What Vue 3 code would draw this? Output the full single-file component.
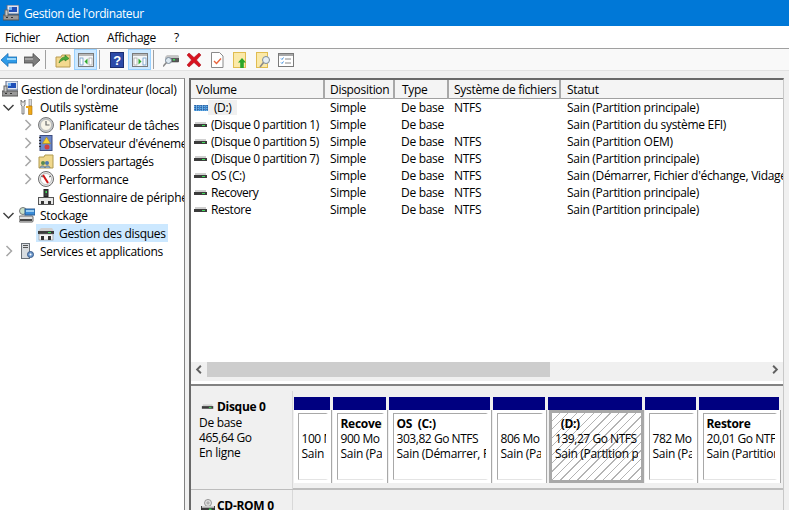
<template>
  <div class="window">
    <div class="titlebar">
      <svg class="title-icon" viewBox="0 0 16 16" v-html="icons.computer"></svg>
      <span>Gestion de l'ordinateur</span>
    </div>

    <div class="menubar">
      <span v-for="m in menus" :key="m.label" class="menu-item" :style="{ width: m.width + 'px' }">{{ m.label }}</span>
    </div>

    <div class="toolbar">
      <template v-for="(b, index) in toolbar" :key="index">
        <span v-if="b === 'sep'" class="tool-sep"></span>
        <span v-else class="tool-btn" :class="{ toggled: b.startsWith('toggle') }">
          <svg viewBox="0 0 16 16" v-html="icons[b]"></svg>
        </span>
      </template>
    </div>

    <div class="panes">
      <div class="tree">
        <div v-for="row in treeRows" :key="row.label" class="tree-row" :class="'level-' + row.level">
          <svg v-if="row.level" class="chevron" :class="row.open ? 'open' : ''" viewBox="0 0 16 16">
            <path v-if="row.open === true" d="M3 6l5 5 5-5" />
            <path v-else-if="row.open === false" d="M6 3l5 5-5 5" />
          </svg>
          <span class="node" :class="{ selected: row.selected }">
            <svg class="node-icon" viewBox="0 0 16 16" v-html="icons[row.icon]"></svg>
            <span class="node-label">{{ row.label }}</span>
          </span>
        </div>
      </div>

      <div class="splitter"></div>

      <div class="content">
        <div class="list">
          <div class="list-head">
            <span v-for="col in columns" :key="col" class="head-cell">{{ col }}</span>
          </div>
          <div class="list-body">
            <div v-for="vol in volumes" :key="vol.name" class="list-row">
              <span class="cell-volume">
                <svg class="vol-icon" viewBox="0 0 16 16" v-html="vol.focus ? icons.diskHatch : icons.disk"></svg>
                <span class="vol-name" :class="{ focus: vol.focus }">{{ vol.name }}</span>
              </span>
              <span class="cell">Simple</span>
              <span class="cell">De base</span>
              <span class="cell">{{ vol.fs }}</span>
              <span class="cell">{{ vol.status }}</span>
            </div>
          </div>
          <div class="hscroll">
            <svg class="scroll-arrow" viewBox="0 0 16 16"><path d="M10 4L6 8l4 4" /></svg>
            <div class="scroll-track"><div class="scroll-thumb"></div></div>
            <svg class="scroll-arrow" viewBox="0 0 16 16"><path d="M6 4l4 4-4 4" /></svg>
          </div>
        </div>

        <div class="pane-gap"></div>

        <div class="disks">
          <div class="disk-row">
            <div class="disk-info">
              <div class="disk-title">
                <svg viewBox="0 0 16 16" v-html="icons.disk"></svg>
                <b>Disque 0</b>
              </div>
              <div>De base</div>
              <div class="digits">465,64 Go</div>
              <div>En ligne</div>
            </div>
            <div class="segments">
              <div v-for="seg in segments" :key="seg.size" class="segment" :style="{ width: seg.width + 'px' }">
                <div class="seg-bar"></div>
                <div class="seg-body" :class="{ active: seg.active }">
                  <div class="seg-inner">
                    <div class="seg-name">{{ seg.name }}</div>
                    <div class="digits">{{ seg.size }}</div>
                    <div>{{ seg.state }}</div>
                  </div>
                </div>
              </div>
            </div>
          </div>
          <div class="disk-row second">
            <div class="disk-info">
              <div class="disk-title">
                <svg viewBox="0 0 16 16" v-html="icons.cdrom"></svg>
                <b>CD-ROM 0</b>
              </div>
            </div>
          </div>
        </div>
      </div>
    </div>
  </div>
</template>

<script setup>
const menus = [
  { label: 'Fichier', width: 51 },
  { label: 'Action', width: 51 },
  { label: 'Affichage', width: 67 },
  { label: '?', width: 20 }
]

const toolbar = ['back', 'forward', 'sep', 'up', 'toggleLeft', 'sep', 'help', 'toggleRight', 'sep', 'connect', 'remove', 'check', 'folderUp', 'folderFind', 'list']

const treeRows = [
  { level: 0, icon: 'computer', label: "Gestion de l'ordinateur (local)" },
  { level: 1, open: true, icon: 'tools', label: 'Outils système' },
  { level: 2, open: false, icon: 'clock', label: 'Planificateur de tâches' },
  { level: 2, open: false, icon: 'events', label: "Observateur d'événements" },
  { level: 2, open: false, icon: 'shared', label: 'Dossiers partagés' },
  { level: 2, open: false, icon: 'perf', label: 'Performance' },
  { level: 2, icon: 'device', label: 'Gestionnaire de périphériques' },
  { level: 1, open: true, icon: 'storage', label: 'Stockage' },
  { level: 2, icon: 'diskTree', label: 'Gestion des disques', selected: true },
  { level: 1, open: false, icon: 'services', label: 'Services et applications' }
]

const columns = ['Volume', 'Disposition', 'Type', 'Système de fichiers', 'Statut']

const volumes = [
  { name: '(D:)', fs: 'NTFS', status: 'Sain (Partition principale)', focus: true },
  { name: '(Disque 0 partition 1)', fs: '', status: 'Sain (Partition du système EFI)' },
  { name: '(Disque 0 partition 5)', fs: 'NTFS', status: 'Sain (Partition OEM)' },
  { name: '(Disque 0 partition 7)', fs: 'NTFS', status: 'Sain (Partition principale)' },
  { name: 'OS (C:)', fs: 'NTFS', status: "Sain (Démarrer, Fichier d'échange, Vidage sur incident)" },
  { name: 'Recovery', fs: 'NTFS', status: 'Sain (Partition principale)' },
  { name: 'Restore', fs: 'NTFS', status: 'Sain (Partition principale)' }
]

const segments = [
  { width: 39, name: '', size: '100 Mo', state: 'Sain (Partition du système EFI)' },
  { width: 56, name: 'Recovery', size: '900 Mo NTFS', state: 'Sain (Partition principale)' },
  { width: 104, name: 'OS\u00a0\u00a0(C:)', size: '303,82 Go NTFS', state: 'Sain (Démarrer, Fichier)' },
  { width: 55, name: '', size: '806 Mo NTFS', state: 'Sain (Partition OEM)' },
  { width: 97, name: '\u00a0\u00a0(D:)', size: '139,27 Go NTFS', state: 'Sain (Partition principale)', active: true },
  { width: 54, name: '', size: '782 Mo NTFS', state: 'Sain (Partition principale)' },
  { width: 83, name: 'Restore', size: '20,01 Go NTFS', state: 'Sain (Partition principale)' }
]

// petites icônes 16x16 dessinées à la main
const icons = {
  computer: '<rect x="4" y="0" width="12" height="9" fill="#dfe6f2" stroke="#5a6a8a"/><rect x="6" y="2" width="8" height="5" fill="#1f4fb8"/><rect x="6" y="2" width="3" height="3" fill="#6fb0f0"/><rect x="0" y="10" width="16" height="5" fill="#9a9a9a" stroke="#555"/><rect x="2" y="5" width="3" height="6" fill="#c8c8c8" stroke="#666"/><rect x="3" y="12" width="2" height="1" fill="#333"/><rect x="8" y="12" width="2" height="1" fill="#333"/>',
  back: '<path d="M0 8l7-6.500v3.500h9v6H7v3.500z" fill="#2f9be8" stroke="#1a6cb0" stroke-width=".8"/><rect x="6" y="6" width="9" height="2" fill="#9ad6fa"/>',
  forward: '<path d="M16 8L9 1.500V5H0v6h9v3.500z" fill="#7d7d7d" stroke="#4a4a4a" stroke-width=".8"/><rect x="1" y="6" width="8" height="2" fill="#a5a5a5"/>',
  up: '<path d="M1 5h5l1-2h8v12H1z" fill="#f3d98f" stroke="#b99a4e"/><path d="M4 11c1-4 3-6 6-6V3l4 3.500L10 9V7.500C8 7.500 6 9 4 11z" fill="#4aa83c" stroke="#2a7a22" stroke-width=".6"/>',
  toggleLeft: '<rect x="0.500" y="1.500" width="15" height="13" fill="#f4f6f8" stroke="#7a7a7a"/><rect x="1" y="2" width="14" height="2" fill="#b8b8b8"/><rect x="2" y="6" width="3" height="7" fill="#fff" stroke="#5b8ec0" stroke-width=".7"/><rect x="11" y="6" width="3" height="7" fill="#fff" stroke="#a0a0a0" stroke-width=".7"/><path d="M9.500 6.500v6L6.500 9.500z" fill="#2faa2f"/>',
  toggleRight: '<rect x="0.500" y="1.500" width="15" height="13" fill="#f4f6f8" stroke="#7a7a7a"/><rect x="1" y="2" width="14" height="2" fill="#b8b8b8"/><rect x="2" y="6" width="3" height="7" fill="#fff" stroke="#a0a0a0" stroke-width=".7"/><rect x="11" y="6" width="3" height="7" fill="#fff" stroke="#5b8ec0" stroke-width=".7"/><path d="M6.500 6.500v6l3-3z" fill="#2faa2f"/>',
  help: '<rect x="1.500" y="0.500" width="13" height="15" fill="#2c4aa8" stroke="#1b2c70"/><text x="8" y="13" font-size="13" font-weight="700" text-anchor="middle" fill="#fff" font-family="Liberation Sans, sans-serif">?</text>',
  connect: '<rect x="3" y="4" width="13" height="6" rx="1" fill="#5a5a5a" stroke="#333" stroke-width=".5"/><rect x="3" y="4" width="13" height="2" fill="#c4c4c4"/><rect x="10" y="7" width="2" height="1.500" fill="#3fe05a"/><circle cx="5.500" cy="8.500" r="3" fill="#dce8f0" stroke="#7a8a9a"/><path d="M3.500 10.500L0 14.500" stroke="#888" stroke-width="1.500"/>',
  remove: '<path d="M1 3l2-2 5 4.500L13 1l2 2-4.500 5 4.500 5-2 2-5-4.500L3 15l-2-2 4.500-5z" fill="#d8121f" stroke="#a30a14" stroke-width=".5"/>',
  check: '<path d="M2.500.5h8l3.500 3.500v11.500H2.500z" fill="#fff" stroke="#8a8a8a"/><path d="M5 9l2.500 2.500L12 6.500" fill="none" stroke="#e8643c" stroke-width="1.400"/>',
  folderUp: '<rect x="1.500" y="0.500" width="12" height="15" fill="#fbe9a8" stroke="#e0bc50"/><path d="M10 6l4 4.500h-2.200V16H8.200v-5.500H6z" fill="#2aa62a"/>',
  folderFind: '<rect x="1.500" y="0.500" width="11" height="15" fill="#fbe9a8" stroke="#e0bc50"/><circle cx="11" cy="8" r="3.500" fill="#e6eef4" stroke="#7d8c98"/><path d="M8.500 10.500L5 15" stroke="#8a8a8a" stroke-width="1.600"/>',
  list: '<rect x="0.500" y="1.500" width="15" height="13" fill="#fff" stroke="#7a7a7a"/><rect x="1" y="2" width="14" height="2" fill="#a8a8a8"/><path d="M3 6.500l1 1 1.500-2M3 10.500l1 1 1.500-2" fill="none" stroke="#3c8ee0"/><path d="M7 7h6M7 11h6" stroke="#8a8a8a"/>',
  tools: '<path d="M2 1v5l1 1v8h2V7l1-1V1L5 3H3z" fill="#e8e8e8" stroke="#555" stroke-width=".7"/><rect x="10" y="0" width="2.500" height="7" fill="#d8d8d8" stroke="#666" stroke-width=".5"/><path d="M9.500 7h3.500v8.500H9.500z" fill="#f0a818" stroke="#a87008" stroke-width=".6"/><rect x="7" y="7" width="3" height="2" fill="#f0a818"/>',
  clock: '<circle cx="8" cy="8" r="7.500" fill="#c4c8cc" stroke="#7a7a7a"/><circle cx="8" cy="8" r="5.500" fill="#f8f4e8" stroke="#9a9a9a" stroke-width=".5"/><path d="M8 4v4h3.500" fill="none" stroke="#6a6a6a" stroke-width="1.200"/>',
  events: '<rect x="2" y="0.500" width="12" height="15" fill="#6c88c8" stroke="#3c4c80"/><rect x="1" y="2" width="2" height="1" fill="#333"/><rect x="1" y="5" width="2" height="1" fill="#333"/><rect x="1" y="8" width="2" height="1" fill="#333"/><rect x="1" y="11" width="2" height="1" fill="#333"/><path d="M8.500 2l4 6.500h-8z" fill="#f8d030" stroke="#a08010" stroke-width=".5"/><circle cx="9" cy="12" r="2.500" fill="#d04040"/>',
  shared: '<path d="M1 4h5l1-2h8v13H1z" fill="#f0d88c" stroke="#b09a50"/><circle cx="5" cy="10" r="2" fill="#5a8a50"/><circle cx="9" cy="10" r="2" fill="#4a7ab0"/><path d="M2 15c0-3 5-3 5 0M7 15c0-3 5-3 5 0" fill="#8aa8c0" stroke="#506070" stroke-width=".6"/>',
  perf: '<circle cx="8" cy="8" r="7.500" fill="#e8e8e8" stroke="#6a6a6a"/><circle cx="8" cy="8" r="5.500" fill="#fff" stroke="#9a9a9a" stroke-width=".6"/><path d="M5 4l5 8" stroke="#d01818" stroke-width="2"/><path d="M3 5l2 1M13 5l-2 1" stroke="#555"/>',
  device: '<rect x="6" y="0.500" width="4" height="7" fill="#404040" stroke="#222"/><rect x="7.500" y="2" width="1.500" height="2" fill="#3fe05a"/><rect x="0.500" y="8.500" width="15" height="7" fill="#e8e8e8" stroke="#555"/><rect x="3" y="12" width="3" height="3" fill="#333"/><rect x="10" y="12" width="3" height="3" fill="#333"/>',
  storage: '<rect x="0" y="9" width="14" height="6" rx="1" fill="#e0e0e0" stroke="#666"/><rect x="1" y="12" width="12" height="2" fill="#444"/><circle cx="4" cy="4" r="3.500" fill="#c8e0c8" stroke="#777"/><rect x="6" y="2" width="10" height="6" fill="#3a8cd8" stroke="#2a5a90"/><rect x="7" y="3" width="8" height="2" fill="#9accf0"/>',
  disk: '<rect x="2" y="5" width="11" height="2" fill="#cfcfcf"/><rect x="1" y="7" width="13" height="3" fill="#3c3c3c"/><rect x="9" y="8" width="3" height="1" fill="#3fe05a"/>',
  diskTree: '<path d="M3 3h11l2 3H0z" fill="#d0d0d0"/><rect x="0" y="6" width="16" height="3" fill="#3c3c3c"/><rect x="10" y="7" width="3" height="1" fill="#3fe05a"/><rect x="1" y="9" width="14" height="6" fill="#f6f6f6" stroke="#777" stroke-width=".5"/><rect x="3" y="11" width="3" height="4" fill="#333"/><rect x="10" y="11" width="3" height="4" fill="#333"/>',
  diskHatch: '<rect x="1" y="5" width="14" height="6" fill="#3a8ad0"/><path d="M1 6h14M1 8h14M1 10h14" stroke="#a8d0f0" stroke-dasharray="1 1"/><path d="M2 5v6M5 5v6M8 5v6M11 5v6M14 5v6" stroke="#1f3f80" stroke-dasharray="1 1"/>',
  cdrom: '<circle cx="8" cy="4.500" r="4" fill="#e0e0e0" stroke="#8a8a8a"/><circle cx="8" cy="4.500" r="1.200" fill="#fff" stroke="#8a8a8a"/><rect x="0.500" y="8.500" width="15" height="6" fill="#3c3c3c" stroke="#2a2a2a"/><rect x="1" y="8" width="14" height="2" fill="#d0d0d0"/><rect x="9" y="11" width="3" height="1.500" fill="#3fe05a"/>',
  services: '<rect x="2.500" y="0.500" width="8" height="15" fill="#d8dce0" stroke="#6a7078"/><rect x="4" y="2" width="5" height="1" fill="#555"/><rect x="4" y="4" width="5" height="1" fill="#555"/><circle cx="11.500" cy="11.500" r="3" fill="#6c98cc" stroke="#3a5a88"/><circle cx="11.500" cy="11.500" r="1" fill="#fff"/>'
}
</script>

<style>
html, body {
  margin: 0;
  background: #f0f0f0;
}
</style>

<style scoped>
.window {
  width: 789px;
  height: 510px;
  overflow: hidden;
  display: flex;
  flex-direction: column;
  background: #f0f0f0;
  color: #000;
  font-family: "Open Sans", "Liberation Sans", sans-serif;
  font-size: 12px;
  letter-spacing: -0.3px;
}

.titlebar {
  height: 26px;
  flex-shrink: 0;
  display: flex;
  align-items: center;
  padding-left: 3px;
  gap: 5px;
  background: #0078d7;
  color: #fff;
  letter-spacing: -0.4px;
}

.title-icon {
  width: 16px;
  height: 16px;
}

.menubar {
  height: 22px;
  flex-shrink: 0;
  display: flex;
  align-items: center;
  padding-left: 5px;
  background: #fff;
}

.toolbar {
  height: 23px;
  flex-shrink: 0;
  box-sizing: border-box;
  display: flex;
  align-items: center;
  margin-left: -3px;
  border-top: 1px solid #a0a0a0;
  background: #f9f9f9;
  border-bottom: 1px solid #e2e2e2;
}

.tool-btn {
  width: 23px;
  height: 21px;
  box-sizing: border-box;
  display: flex;
  align-items: center;
  justify-content: center;
}

.tool-btn svg {
  width: 16px;
  height: 16px;
}

.tool-btn.toggled {
  background: #cce8ff;
  border: 1px solid #99d1ff;
}

.tool-sep {
  width: 8px;
  height: 21px;
  box-sizing: border-box;
  padding-left: 2px;
}

.tool-sep::before {
  content: '';
  display: block;
  width: 1px;
  height: 19px;
  margin-top: 1px;
  background: #a0a0a0;
}

.panes {
  flex: 1;
  min-height: 0;
  display: flex;
  margin-top: 7px;
}

.tree {
  width: 185px;
  flex-shrink: 0;
  box-sizing: border-box;
  padding-top: 1px;
  border-top: 1px solid #a0a0a0;
  border-right: 1px solid #828282;
  background: #fff;
  overflow: hidden;
}

.tree-row {
  height: 18px;
  display: flex;
  align-items: center;
  white-space: nowrap;
}

.level-2 {
  padding-left: 19px;
}

.chevron {
  width: 17px;
  height: 16px;
  flex-shrink: 0;
  fill: none;
  stroke: #a6a6a6;
  stroke-width: 1.5;
}

.chevron.open {
  stroke: #404040;
}

.node {
  display: flex;
  align-items: center;
  gap: 5px;
  height: 18px;
  padding: 0 2px 0 2px;
}

.level-0 .node {
  gap: 3px;
}

.node.selected {
  background: #cce8ff;
}

.node-icon {
  width: 16px;
  height: 16px;
  flex-shrink: 0;
}

.splitter {
  width: 4px;
  flex-shrink: 0;
}

.content {
  width: 595px;
  flex-shrink: 0;
  display: flex;
  flex-direction: column;
  border-top: 2px solid #696969;
  border-left: 2px solid #696969;
  border-right: 1px solid #c8c8c8;
  box-sizing: border-box;
}

.list {
  height: 297px;
  flex-shrink: 0;
  display: flex;
  flex-direction: column;
  background: #fff;
  overflow: hidden;
}

.list-head,
.list-row {
  display: grid;
  grid-template-columns: 134px 70px 54px 112px 1fr;
  white-space: nowrap;
}

.list-head {
  height: 19px;
  box-sizing: border-box;
  border-bottom: 1px solid #a0a0a0;
  background: #f4f4f4;
}

.head-cell {
  padding-left: 5px;
  line-height: 19px;
  border-right: 2px solid #a8a8a8;
  box-sizing: border-box;
}

.head-cell:nth-child(3) {
  padding-left: 7px;
}

.head-cell:last-child {
  padding-left: 6px;
  border-right: 0;
}

.list-body {
  flex: 1;
}

.list-row {
  height: 17px;
  line-height: 17px;
}

.cell {
  padding-left: 5px;
  overflow: hidden;
}

.cell:nth-child(3),
.cell:nth-child(5) {
  padding-left: 6px;
}

.cell-volume {
  display: flex;
  align-items: center;
  padding-left: 2px;
}

.vol-icon {
  width: 16px;
  height: 16px;
  flex-shrink: 0;
}

.vol-name {
  padding-left: 2px;
  letter-spacing: -0.42px;
}

.vol-name.focus {
  margin-left: -1px;
  padding: 0 6px;
  background: #f0f0f0;
  line-height: 15px;
}

.hscroll {
  height: 15px;
  flex-shrink: 0;
  display: flex;
  align-items: center;
  background: #f0f0f0;
}

.scroll-arrow {
  width: 16px;
  height: 15px;
  flex-shrink: 0;
  fill: none;
  stroke: #606060;
  stroke-width: 2;
}

.scroll-track {
  flex: 1;
  height: 15px;
}

.scroll-thumb {
  width: 343px;
  height: 100%;
  background: #cdcdcd;
}

.pane-gap {
  height: 9px;
  flex-shrink: 0;
  box-sizing: border-box;
  border-top: 4px solid #f0f0f0;
  border-bottom: 2px solid #828282;
  background: #fff;
}

.disks {
  flex: 1;
  min-height: 0;
  padding-top: 5px;
  overflow: hidden;
}

.disk-row {
  display: flex;
  height: 98px;
}

.disk-row.second {
  height: 30px;
  border-top: 1px solid #bdbdbd;
}

.disk-info {
  width: 102px;
  flex-shrink: 0;
  box-sizing: border-box;
  padding: 7px 0 0 8px;
  line-height: 15px;
  border-right: 1px solid #d8d8d8;
}

.digits {
  letter-spacing: -0.45px;
}

.disk-title {
  display: flex;
  align-items: center;
  height: 17px;
  margin-left: 2px;
}

.disk-title svg {
  width: 14px;
  height: 14px;
  margin-right: 2px;
  flex-shrink: 0;
}

.segments {
  flex: 1;
  display: flex;
  padding: 6px 0 0 1px;
  height: 98px;
  box-sizing: border-box;
  border-bottom: 1px solid #bdbdbd;
}

.segment {
  flex-shrink: 0;
  display: flex;
  flex-direction: column;
  height: 86px;
}

.seg-bar {
  height: 13px;
  margin-right: 3px;
  background: #000080;
  flex-shrink: 0;
}

.seg-body {
  flex: 1;
  margin-right: 1px;
  padding: 3px 3px 3px 4px;
  background: #fff;
  border-right: 1px solid #a8a8a8;
  min-height: 0;
  display: flex;
}

.seg-inner {
  flex: 1;
  min-width: 0;
  box-sizing: border-box;
  padding: 2px 0 0 2.5px;
  border: 1px solid #a8a8a8;
  border-right: 2px solid #fff;
  border-bottom-color: #e4e4e4;
  line-height: 15px;
  white-space: nowrap;
  overflow: hidden;
}

.seg-name {
  height: 15px;
  font-weight: 700;
}

.seg-body.active {
  padding: 0;
  margin-left: 1px;
  border: 3px solid #a8a8a8;
  background: repeating-linear-gradient(135deg, #fff 0, #fff 5px, #b4b4b4 5px, #b4b4b4 6px);
}

.seg-body.active .seg-inner {
  border: 0;
  border-right: 3px solid transparent;
  padding: 3px 0 0 3px;
}
</style>
